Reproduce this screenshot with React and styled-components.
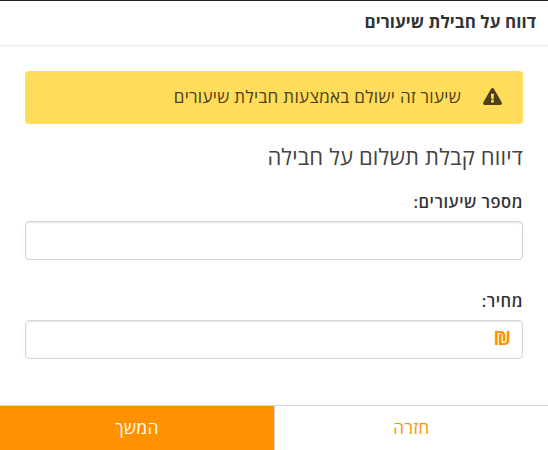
import React, { useState } from 'react';
import styled, { createGlobalStyle } from 'styled-components';
import { FaExclamationTriangle } from 'react-icons/fa';

const App = () => {
	const [lessons, setLessons] = useState('');
	const [price, setPrice] = useState('');

	return (
		<>
			<GlobalStyle />
			<Modal dir='rtl'>
				<Header>
					<Title>דווח על חבילת שיעורים</Title>
				</Header>

				<Body>
					<Alert>
						<FaExclamationTriangle size={19} />
						<AlertText>שיעור זה ישולם באמצעות חבילת שיעורים</AlertText>
					</Alert>

					<Heading>דיווח קבלת תשלום על חבילה</Heading>

					<Field>
						<Label htmlFor='lessons'>מספר שיעורים:</Label>
						<InputBox>
							<Input
								id='lessons'
								value={lessons}
								onChange={(e) => setLessons(e.target.value)}
							/>
						</InputBox>
					</Field>

					<Field>
						<Label htmlFor='price'>מחיר:</Label>
						<InputBox>
							<Currency>₪</Currency>
							<Input
								id='price'
								value={price}
								onChange={(e) => setPrice(e.target.value)}
							/>
						</InputBox>
					</Field>
				</Body>

				<Footer>
					<FooterButton>חזרה</FooterButton>
					<FooterButton $primary>המשך</FooterButton>
				</Footer>
			</Modal>
		</>
	);
};

const GlobalStyle = createGlobalStyle`
	* {
		box-sizing: border-box;
	}

	body {
		margin: 0;
		background-color: #fff;
		color: #333;
		font-family: 'Open Sans', 'Liberation Sans', sans-serif;
		overflow: hidden;
	}
`;

const Modal = styled.div`
	display: flex;
	flex-direction: column;
	height: 450px;
	border-top: 1px solid #231f20;
`;

const Header = styled.header`
	display: flex;
	align-items: center;
	height: 45px;
	padding: 0 12px 3px;
	border-bottom: 1px solid #ececec;
	box-shadow: 0 1px 1px #f6f6f6;
`;

const Title = styled.h1`
	margin: 0;
	font-size: 17px;
	font-weight: 700;
	letter-spacing: 0.05px;
	line-height: 24px;
	white-space: nowrap;
`;

const Body = styled.main`
	flex: 1;
	padding: 25px 25px 0;
`;

const Alert = styled.div`
	display: flex;
	align-items: center;
	gap: 22px;
	height: 53px;
	padding: 0 21px 2px;
	border-radius: 4px;
	background-color: #ffdc59;
	color: #4b4019;
`;

const AlertText = styled.span`
	font-size: 17px;
	letter-spacing: 0.32px;
	line-height: 24px;
	white-space: nowrap;
`;

const Heading = styled.h2`
	margin: 16px 0 18px;
	color: #444;
	font-size: 22px;
	font-weight: 400;
	letter-spacing: 0.16px;
	line-height: 32px;
	white-space: nowrap;
`;

const Field = styled.div`
	margin-bottom: 29px;
`;

const Label = styled.label`
	display: block;
	margin-bottom: 7px;
	font-size: 16.5px;
	font-weight: 600;
	letter-spacing: 0.5px;
	line-height: 24px;
`;

const InputBox = styled.div`
	position: relative;
	display: flex;
	align-items: center;
	height: 39px;
	padding: 0 11px 3px;
	border: 1px solid #d5d5d5;
	border-radius: 4px;
	box-shadow: inset 0 1px 2px rgba(0, 0, 0, 0.1);

	&::before,
	&::after {
		content: '';
		position: absolute;
		top: 6px;
		bottom: 3px;
		width: 1px;
		background-color: #fff6ec;
	}

	&::before {
		left: -4px;
	}

	&::after {
		right: -4px;
	}
`;

const Input = styled.input`
	flex: 1;
	min-width: 0;
	padding: 0;
	border: none;
	outline: none;
	background-color: transparent;
	font: inherit;
`;

const Currency = styled.span`
	color: #ff9100;
	font-size: 19px;
	font-weight: 700;
	line-height: 24px;
`;

const Footer = styled.footer`
	display: grid;
	grid-template-columns: 274px 274px;
	height: 45px;
	border-top: 1px solid #d5d5d5;
`;

const FooterButton = styled.button`
	padding: 0;
	border: none;
	border-left: ${({ $primary }) => ($primary ? 'none' : '1px solid #d5d5d5')};
	background-color: ${({ $primary }) => ($primary ? '#ff9100' : '#fff')};
	color: ${({ $primary }) => ($primary ? '#fff' : '#ff9100')};
	font-family: inherit;
	font-size: 17px;
	letter-spacing: 0.5px;
	line-height: 24px;
	cursor: pointer;
`;

export default App;
